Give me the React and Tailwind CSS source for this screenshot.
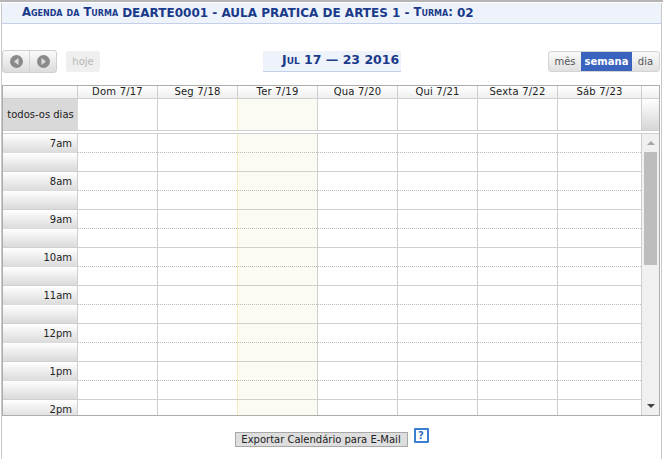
const DAYS = ['Dom 7/17', 'Seg 7/18', 'Ter 7/19', 'Qua 7/20', 'Qui 7/21', 'Sexta 7/22', 'Sáb 7/23']
const HOURS = ['7am', '8am', '9am', '10am', '11am', '12pm', '1pm', '2pm']
const TODAY = 2

// borda direita de cada coluna; a que antecede hoje fica amarela
function colClass(i) {
  const width = i === DAYS.length - 1 ? 'w-[84px]' : 'w-[80px]'
  const border = i === TODAY - 1 ? 'border-r-[#f5ecbc]' : 'border-r-[#cfcfcf]'
  return `${width} shrink-0 border-r ${border} ${i === TODAY ? 'bg-[#fbfaf3]' : ''}`
}

function NavIcon({ dir }) {
  return (
    <svg width="13" height="13" viewBox="0 0 13 13">
      <circle cx="6.5" cy="6.5" r="6.5" fill="#8a8a8a" />
      <polygon points={dir === 'left' ? '8.5,3 8.5,10 4,6.5' : '4.5,3 4.5,10 9,6.5'} fill="#dedede" />
    </svg>
  )
}

function Title() {
  return (
    <div className="h-[21px] mt-[1px] bg-[#eef3fb] border-b border-[#c3d0e8] pl-[20px] flex items-center text-[12px] font-bold text-[#1a3a8a] whitespace-nowrap">
      <span className="[font-variant:small-caps] text-[11.6px]">Agenda da Turma</span>
      <span className="ml-[4px]">DEARTE0001 - AULA PRATICA DE ARTES 1 -</span>
      <span className="ml-[4px] [font-variant:small-caps] text-[11.6px]">Turma:</span>
      <span className="ml-[4px]">02</span>
    </div>
  )
}

function Toolbar() {
  return (
    <div className="h-[36px] mt-[19px] flex items-center">
      <div className="flex items-center h-[23px] w-[55px] border border-[#d0d0d0] rounded-[3px] bg-gradient-to-b from-[#fafafa] to-[#dcdcdc]">
        <div className="w-[27px] h-full flex items-center justify-center border-r border-[#d4d4d4]"><NavIcon dir="left" /></div>
        <div className="flex-1 h-full flex items-center justify-center"><NavIcon dir="right" /></div>
      </div>
      <div className="ml-[9px] w-[34px] h-[21px] rounded-[3px] bg-[#efefef] text-[#b8b8b8] text-[10px] flex items-center justify-center">hoje</div>
      <div className="ml-[163px] w-[138px] h-[21px] bg-[#eef3fb] border-b border-[#c3d0e8] pl-[19px] flex items-center text-[12.5px] font-bold text-[#1a3a8a] [font-variant:small-caps] whitespace-nowrap">
        Jul 17 — 23 2016
      </div>
      <div className="ml-auto mr-[1px] flex h-[21px] w-[112px] border border-[#d4d4d4] rounded-[3px] text-[10px] text-[#555] bg-gradient-to-b from-[#fafafa] to-[#e0e0e0] overflow-hidden">
        <div className="w-[32px] flex items-center justify-center">mês</div>
        <div className="w-[51px] flex items-center justify-center font-bold text-white bg-[#3a63c0]">semana</div>
        <div className="flex-1 flex items-center justify-center">dia</div>
      </div>
    </div>
  )
}

function HeaderRow() {
  return (
    <div className="flex h-[13px] shrink-0 border-b border-[#cfcfcf] bg-gradient-to-b from-white to-[#efefef] text-[10px] tracking-[0.2px] text-[#222]">
      <div className="w-[75px] shrink-0 border-r border-[#cfcfcf]" />
      {DAYS.map((d, i) => (
        <div key={d} className={`${i === DAYS.length - 1 ? 'w-[84px]' : 'w-[80px]'} shrink-0 border-r border-[#cfcfcf] flex items-center justify-center leading-none`}>{d}</div>
      ))}
    </div>
  )
}

function AllDayRow() {
  return (
    <div className="flex h-[32px] shrink-0 border-b border-[#cfcfcf] text-[10px] text-[#222]">
      <div className="w-[75px] shrink-0 bg-[#d9d9d9] flex items-center justify-center">todos-os dias</div>
      {DAYS.map((d, i) => <div key={d} className={colClass(i)} />)}
      <div className="flex-1 bg-gradient-to-b from-white to-[#d6d6d6]" />
    </div>
  )
}

function HourRow({ label }) {
  return (
    <div className="flex h-[38px] border-b border-[#cfcfcf] shrink-0">
      <div className="w-[75px] shrink-0 border-r border-[#cfcfcf] text-[10px] text-[#222]">
        <div className="h-[19px] pr-[5px] flex items-center justify-end bg-gradient-to-b from-white to-[#dadada]">{label}</div>
        <div className="h-[18px] bg-gradient-to-b from-white to-[#dadada]" />
      </div>
      <div className="flex-1 relative flex">
        {DAYS.map((d, i) => <div key={d} className={colClass(i)} />)}
        <div className="absolute left-0 right-0 top-[18px] border-t border-dotted border-[#bdbdbd]" />
      </div>
    </div>
  )
}

function Scrollbar() {
  return (
    <div className="absolute right-0 top-0 bottom-0 w-[17px] bg-[#f0f0f0] flex flex-col items-center">
      <div className="h-[18px] w-full flex items-center justify-center">
        <div className="w-0 h-0 border-x-[4px] border-x-transparent border-b-[4px] border-b-[#a6a6a6]" />
      </div>
      <div className="w-[13px] h-[113px] bg-[#bdbdbd]" />
      <div className="mt-auto h-[18px] w-full flex items-center justify-center">
        <div className="w-0 h-0 border-x-[4px] border-x-transparent border-t-[4px] border-t-[#444]" />
      </div>
    </div>
  )
}

export default function App() {
  return (
    <div className="w-[663px] h-[459px] bg-white overflow-hidden font-['DejaVu_Sans',Verdana,sans-serif] border-t-2 border-[#b5b5b5]">
      <div className="h-[457px] ml-[1px] mr-[1px] border-x border-[#c9c9c9]">
        <Title />
        <Toolbar />
        <div className="mt-[6px] h-[331px] w-[658px] border border-[#adadad] flex flex-col overflow-hidden">
          <HeaderRow />
          <AllDayRow />
          <div className="relative flex-1 mt-[2px] border-t border-[#cfcfcf] overflow-hidden">
            {HOURS.map(h => <HourRow key={h} label={h} />)}
            <Scrollbar />
          </div>
        </div>
        <div className="flex justify-center items-start mt-[12px]">
          <button className="h-[15px] w-[173px] bg-[#dedede] border border-[#a8a8a8] text-[10px] text-[#222] leading-none mt-[4px]">Exportar Calendário para E-Mail</button>
          <span className="ml-[6px] w-[15px] h-[15px] border-2 border-[#3a7fd0] rounded-[1px] bg-white text-[#2f74c8] text-[10px] font-bold flex items-center justify-center leading-none">?</span>
        </div>
      </div>
    </div>
  )
}
